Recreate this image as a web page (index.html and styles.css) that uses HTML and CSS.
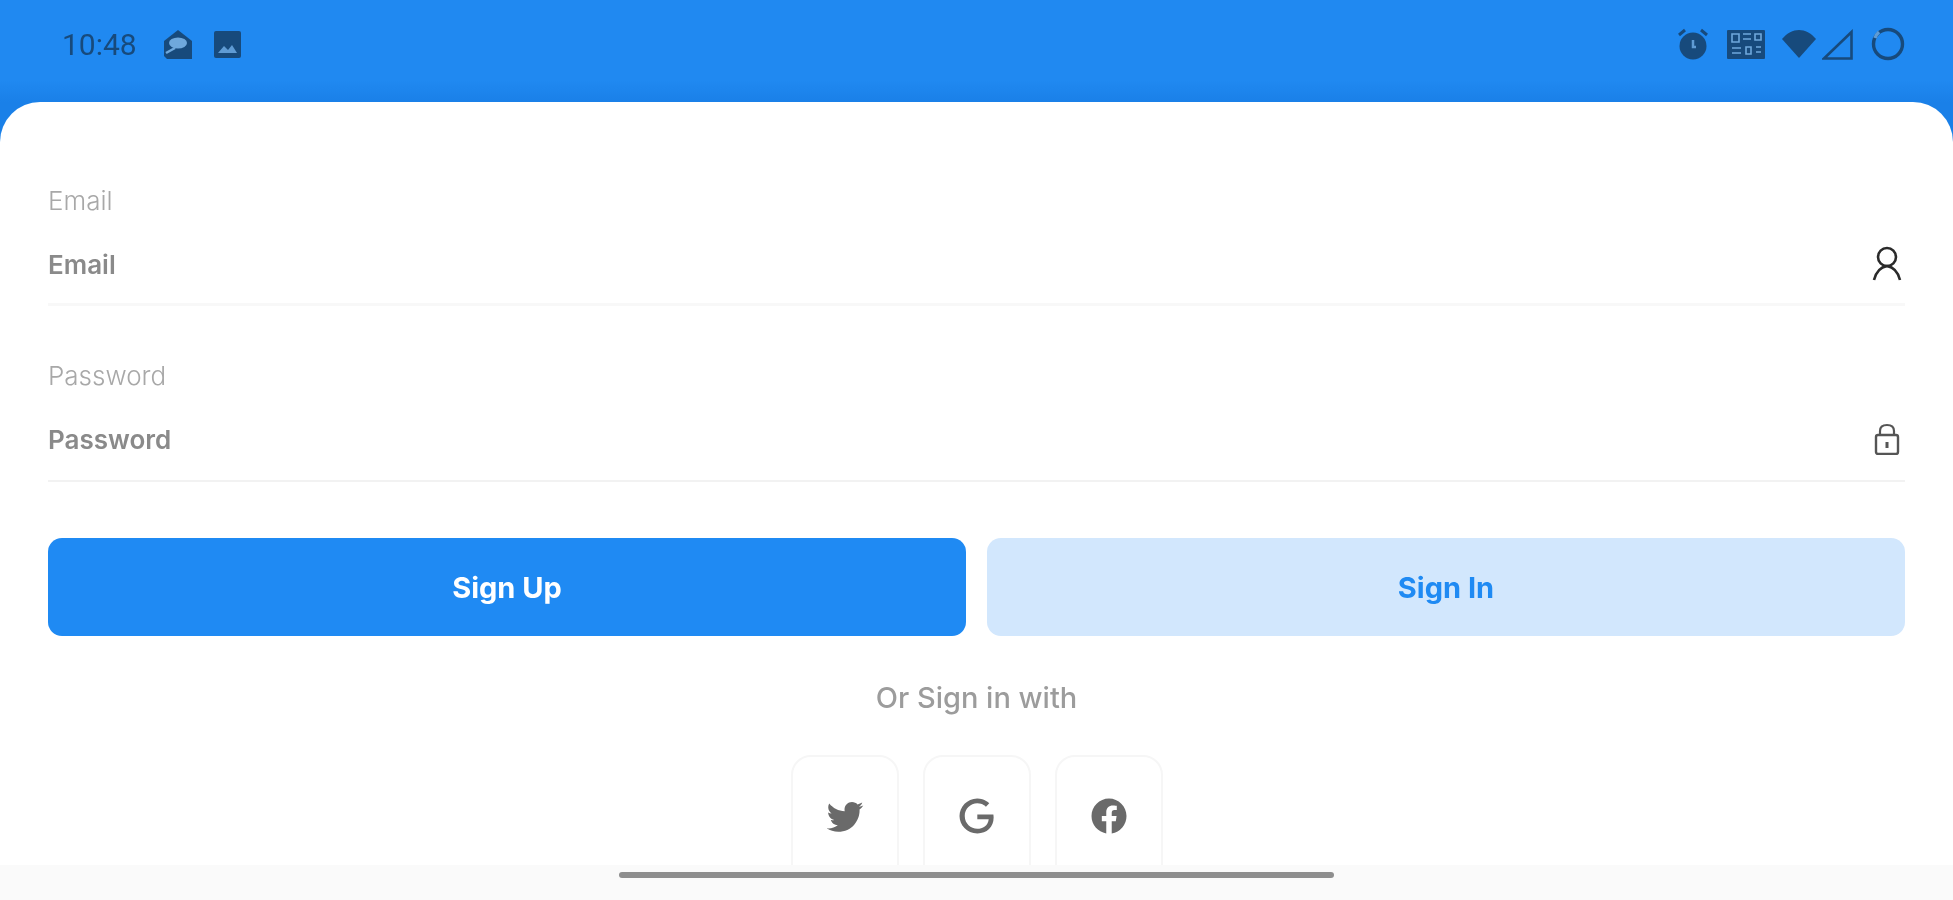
FILE: index.html
```html
<!DOCTYPE html>
<html>
  <head>
    <link rel="stylesheet" href="styles.css">
  </head>
  <body>
    <main class="app">
      <header class="status-bar">
        <div class="status-group">
          <span class="time">10:48</span>
          <svg class="status-icon mail-icon" viewBox="0 0 30 30">
            <path d="M15 1 L29 12 V30 H4 L1 27 V12 Z" fill="#174a7c"/>
            <ellipse cx="15" cy="14" rx="9" ry="5.5" fill="#6fa8dc"/>
            <path d="M3 24 L12 19" stroke="#6fa8dc" stroke-width="2.5"/>
          </svg>
          <svg class="status-icon image-icon" viewBox="0 0 27 27">
            <rect width="27" height="27" rx="2" fill="#174a7c"/>
            <path d="M4 22 L10 15 L14 19 L18 14 L23 22 Z" fill="#5f9bd4"/>
          </svg>
        </div>
        <div class="status-group status-right">
          <svg class="status-icon alarm-icon" viewBox="0 0 32 32">
            <circle cx="16" cy="18" r="13.5" fill="#174a7c"/>
            <path d="M2 7 L8 2 M30 7 L24 2" stroke="#174a7c" stroke-width="3"/>
            <path d="M16 12 V19 H19" stroke="#5f9bd4" stroke-width="2.5" fill="none"/>
          </svg>
          <svg class="status-icon grid-icon" viewBox="0 0 38 29">
            <rect width="38" height="29" rx="1" fill="#174a7c"/>
            <path d="M5 4 H12 V12 H5 Z M16 4 H24 M16 9 H24 M28 4 H34 V10 H28 Z M5 18 H14 M5 23 H14 M19 17 H24 V24 H19 Z M29 17 H34 M29 22 H34" stroke="#6fa8dc" stroke-width="1.6" fill="none"/>
          </svg>
          <svg class="status-icon wifi-icon" viewBox="0 0 34 28">
            <path d="M17 28 L0 9 C5 3 11 0 17 0 C23 0 29 3 34 9 Z" fill="#174a7c"/>
          </svg>
          <svg class="status-icon signal-icon" viewBox="0 0 31 31">
            <path d="M2 29.5 L29.5 3 V29.5 Z" fill="none" stroke="#174a7c" stroke-width="2.6"/>
          </svg>
          <svg class="status-icon ring-icon" viewBox="0 0 34 34">
            <circle cx="17" cy="17" r="14.5" fill="none" stroke="#174a7c" stroke-width="3.4"/>
            <path d="M8 5 A14.5 14.5 0 0 0 4 11" fill="none" stroke="#5f9bd4" stroke-width="3.4"/>
          </svg>
        </div>
      </header>

      <section class="sheet">
        <div class="field">
          <label class="field-label">Email</label>
          <div class="field-row">
            <span class="field-value">Email</span>
            <svg class="field-icon user-icon" viewBox="0 0 30 36">
              <circle cx="15" cy="11" r="9" fill="none" stroke="#2b2b2b" stroke-width="2.6"/>
              <path d="M2 34 C4 26 9 21 15 20 C21 21 26 26 28 34" fill="none" stroke="#2b2b2b" stroke-width="2.6"/>
            </svg>
          </div>
        </div>

        <div class="field field-last">
          <label class="field-label">Password</label>
          <div class="field-row">
            <span class="field-value">Password</span>
            <svg class="field-icon lock-icon" viewBox="0 0 26 32">
              <path d="M6 13 V8 C6 4 9 2 13 2 C17 2 20 4 20 8 V13" fill="none" stroke="#555" stroke-width="2.2"/>
              <rect x="2" y="12" width="22" height="19" rx="2" fill="none" stroke="#555" stroke-width="2.4"/>
              <path d="M13 19 V25" stroke="#555" stroke-width="3"/>
            </svg>
          </div>
        </div>

        <div class="actions">
          <button class="btn btn-primary">Sign Up</button>
          <button class="btn btn-soft">Sign In</button>
        </div>

        <p class="alt-text">Or Sign in with</p>

        <div class="socials">
          <div class="social">
            <svg class="social-icon" viewBox="0 0 24 24"><path d="M22.46,6C21.69,6.35 20.86,6.58 20,6.69C20.88,6.16 21.56,5.32 21.88,4.31C21.05,4.81 20.13,5.16 19.16,5.36C18.37,4.5 17.26,4 16,4C13.65,4 11.73,5.92 11.73,8.29C11.73,8.63 11.77,8.96 11.84,9.27C8.28,9.09 5.11,7.38 3,4.79C2.63,5.42 2.42,6.16 2.42,6.94C2.42,8.43 3.17,9.75 4.33,10.5C3.62,10.5 2.96,10.3 2.38,10C2.38,10 2.38,10 2.38,10.03C2.38,12.11 3.86,13.85 5.82,14.24C5.46,14.34 5.08,14.39 4.69,14.39C4.42,14.39 4.15,14.36 3.89,14.31C4.43,16 6,17.26 7.89,17.29C6.43,18.45 4.58,19.13 2.56,19.13C2.22,19.13 1.88,19.11 1.54,19.07C3.44,20.29 5.7,21 8.12,21C16,21 20.33,14.46 20.33,8.79C20.33,8.6 20.33,8.42 20.32,8.23C21.16,7.63 21.88,6.87 22.46,6Z"/></svg>
          </div>
          <div class="social">
            <svg class="social-icon" viewBox="0 0 24 24"><path d="M21.35,11.1H12.18V13.83H18.69C18.36,17.64 15.19,19.27 12.19,19.27C8.36,19.27 5,16.25 5,12C5,7.9 8.2,4.73 12.2,4.73C15.29,4.73 17.1,6.7 17.1,6.7L19,4.72C19,4.72 16.56,2 12.1,2C6.42,2 2,6.8 2,12C2,17 6.16,22 12.25,22C17.6,22 21.5,18.33 21.5,12.91C21.5,11.76 21.35,11.1 21.35,11.1V11.1Z"/></svg>
          </div>
          <div class="social">
            <svg class="social-icon" viewBox="0 0 24 24"><path d="M12 2.04C6.5 2.04 2 6.53 2 12.06C2 17.06 5.66 21.21 10.44 21.96V14.96H7.9V12.06H10.44V9.85C10.44 7.34 11.93 5.96 14.22 5.96C15.31 5.96 16.45 6.15 16.45 6.15V8.62H15.19C13.95 8.62 13.56 9.39 13.56 10.18V12.06H16.34L15.89 14.96H13.56V21.96A10 10 0 0 0 22 12.06C22 6.53 17.5 2.04 12 2.04Z"/></svg>
          </div>
        </div>
      </section>

      <footer class="nav-bar">
        <div class="nav-handle"></div>
      </footer>
    </main>
  </body>
</html>
```

FILE: styles.css
```css
* {
  margin: 0;
  padding: 0;
  box-sizing: border-box;
}

html, body {
  height: 100%;
  overflow: hidden;
  background: #fff;
}

body {
  font-family: "Inter", "Liberation Sans", sans-serif;
}

.app {
  display: flex;
  flex-direction: column;
  height: 900px;
  background: linear-gradient(#2089f1 0, #2089f1 80px, #1a80e8 102px, #1a80e8 140px);
  filter: blur(0.6px);
}

.status-bar {
  display: flex;
  justify-content: space-between;
  align-items: center;
  height: 102px;
  padding: 0 48px 14px 62px;
}

.status-group {
  display: flex;
  align-items: center;
}

.time {
  font-family: "Roboto", sans-serif;
  font-size: 30px;
  color: #174a7c;
  width: 101px;
}

.status-icon {
  display: block;
}

.mail-icon {
  width: 30px;
  height: 30px;
}

.image-icon {
  width: 27px;
  height: 27px;
  margin-left: 21px;
}

.alarm-icon {
  width: 32px;
  height: 32px;
}

.grid-icon {
  width: 38px;
  height: 29px;
  margin-left: 18px;
}

.wifi-icon {
  width: 34px;
  height: 28px;
  margin-left: 17px;
}

.signal-icon {
  width: 31px;
  height: 31px;
  margin-left: 6px;
}

.ring-icon {
  width: 34px;
  height: 34px;
  margin-left: 18px;
}

.sheet {
  flex: 1;
  min-height: 0;
  overflow: hidden;
  background: #fff;
  border-radius: 40px 40px 0 0;
  padding: 79px 48px 0;
}

.field {
  padding-bottom: 19px;
  border-bottom: 3px solid #f8f8f8;
}

.field-last {
  margin-top: 50px;
  padding-bottom: 21px;
  border-bottom: 2px solid #f2f2f2;
}

.field-label {
  display: block;
  font-size: 26px;
  line-height: 40px;
  font-weight: 300;
  color: #a8a8a8;
}

.field-row {
  display: flex;
  justify-content: space-between;
  align-items: center;
  height: 40px;
  margin-top: 23px;
}

.field-value {
  font-size: 26px;
  font-weight: 600;
  color: #8a8a8a;
}

.user-icon {
  width: 30px;
  height: 36px;
  margin-right: 3px;
}

.lock-icon {
  width: 26px;
  height: 32px;
  margin-right: 5px;
}

.actions {
  display: grid;
  grid-template-columns: 1fr 1fr;
  gap: 21px;
  margin-top: 56px;
}

.btn {
  height: 98px;
  border: 0;
  border-radius: 14px;
  font-family: inherit;
  font-size: 29px;
  font-weight: 700;
}

.btn-primary {
  background: #1f8af3;
  color: #fff;
}

.btn-soft {
  background: #d2e7fd;
  color: #1f8af3;
}

.alt-text {
  margin-top: 42px;
  font-size: 29px;
  line-height: 40px;
  font-weight: 500;
  text-align: center;
  color: #9c9c9c;
}

.socials {
  display: flex;
  justify-content: center;
  gap: 24px;
  margin-top: 37px;
}

.social {
  display: flex;
  justify-content: center;
  width: 108px;
  height: 130px;
  padding-top: 38px;
  border: 2px solid #f6f6f6;
  border-radius: 20px;
}

.social-icon {
  width: 42px;
  height: 42px;
  fill: #6a6a6a;
}

.nav-bar {
  display: flex;
  justify-content: center;
  height: 35px;
  padding-top: 7px;
  background: #fafafa;
}

.nav-handle {
  width: 715px;
  height: 6px;
  border-radius: 3px;
  background: #8e8e8e;
}
```
